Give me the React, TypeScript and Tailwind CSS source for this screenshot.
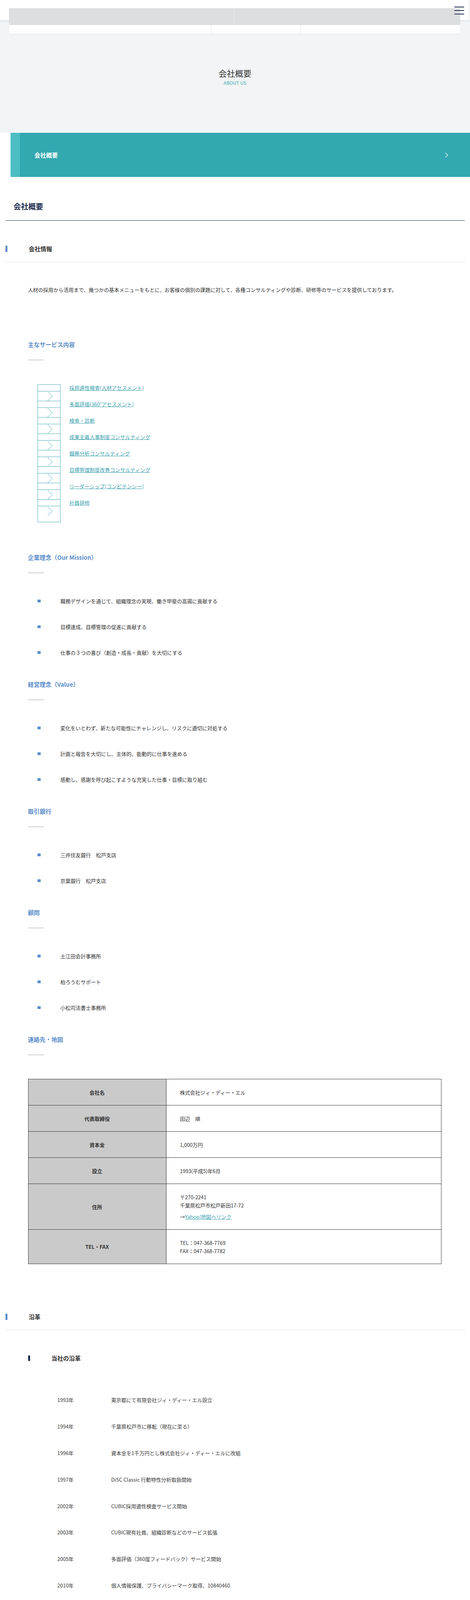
import React from "react";

const services = [
  "採用適性検査(人材アセスメント)",
  "多面評価(360°アセスメント)",
  "検査・診断",
  "成果主義人事制度コンサルティング",
  "職務分析コンサルティング",
  "目標管理制度改善コンサルティング",
  "リーダーシップ(コンピテンシー)",
  "社員研修",
];

const mission = [
  "職務デザインを通じて、組織理念の実現、働き甲斐の高揚に貢献する",
  "目標達成、目標管理の促進に貢献する",
  "仕事の３つの喜び（創造・成長・貢献）を大切にする",
];

const values = [
  "変化をいとわず、新たな可能性にチャレンジし、リスクに適切に対処する",
  "計画と報告を大切にし、主体的、能動的に仕事を進める",
  "感動し、感謝を呼び起こすような充実した仕事・目標に取り組む",
];

const banks = ["三井住友銀行　松戸支店", "京葉銀行　松戸支店"];
const advisors = ["土江田会計事務所", "柏ろうむサポート", "小松司法書士事務所"];

const history: { year: string; lines: string[] }[] = [
  { year: "1993年", lines: ["東京都にて有限会社ジィ・ディー・エル設立"] },
  { year: "1994年", lines: ["千葉県松戸市に移転（現在に至る）"] },
  { year: "1996年", lines: ["資本金を1千万円とし株式会社ジィ・ディー・エルに改組"] },
  { year: "1997年", lines: ["DiSC Classic 行動特性分析取扱開始"] },
  { year: "2002年", lines: ["CUBIC採用適性検査サービス開始"] },
  { year: "2003年", lines: ["CUBIC現有社員、組織診断などのサービス拡張"] },
  { year: "2005年", lines: ["多面評価（360度フィードバック）サービス開始"] },
  { year: "2010年", lines: ["個人情報保護、プライバシーマーク取得、10840460"] },
  { year: "2011年", lines: ["Web採用適性検査Compass取扱開始"] },
  { year: "2012年", lines: ["ストレス耐性診断DIST取扱開始"] },
  { year: "2013年", lines: ["CUBICストレス耐性診断取扱開始"] },
  { year: "2014年", lines: ["アドバンテッジインサイト、一般常識・時事問題取扱開始"] },
  { year: "2015年", lines: ["情報漏えい保険加入", "CUBIC for WEB 採用適性検査 取扱開始"] },
  { year: "2017年", lines: ["CUBICスマホ対応ホームページ整備"] },
  { year: "2018年", lines: ["ISO27001 認証取得"] },
  { year: "2019年", lines: ["360度フィードバック ver8.0サービス開始"] },
  { year: "2020年", lines: ["AIによる適性検査分析サービス開始"] },
  { year: "2023年", lines: ["田辺和彦が非常勤取締役に、田辺 順が代表取締役に就任(9月)"] },
];

function H2({ children, className }: { children: React.ReactNode; className: string }) {
  return (
    <div className={`border-b border-[#e0e0e0] pb-[21px] ${className}`}>
      <div className="flex h-[24px] items-center">
        <span className="h-[16px] w-[5px] shrink-0 bg-[#5b8dc9]" />
        <h2 className="ml-[55px] text-[15px] font-bold leading-[24px] text-[#333333]">{children}</h2>
      </div>
    </div>
  );
}

function SubHeading({ children, className }: { children: React.ReactNode; className: string }) {
  return (
    <div className={className}>
      <h4 className="text-[15px] font-bold leading-[22px] text-[#5b8dc9]">{children}</h4>
      <div className="mt-[27px] h-[3px] w-[40px] bg-[#dddddd]" />
    </div>
  );
}

function BulletList({ items }: { items: string[] }) {
  return (
    <ul className="mt-[37px]">
      {items.map((t) => (
        <li key={t} className="flex h-[66px] items-center">
          <span className="ml-[24px] h-[7px] w-[8px] shrink-0 bg-[#5b8dc9]" />
          <span className="ml-[51px] text-[13px] leading-[21px] text-[#333333]">{t}</span>
        </li>
      ))}
    </ul>
  );
}

function ListChevron() {
  return (
    <svg width="14" height="23" viewBox="0 0 14 23" fill="none">
      <polyline points="1,0 13,11.5 1,23" stroke="#3fa6b1" strokeWidth="1" />
    </svg>
  );
}

export default function App() {
  return (
    <div className="h-[6000px] w-full overflow-hidden bg-white font-['Noto_Sans_CJK_JP','Noto_Sans',sans-serif] text-[#333333]">
      {/* Header */}
      <header className="relative z-10 h-[52px] bg-white shadow-[0_1px_4px_rgba(0,0,0,0.15)]">
        <div className="absolute left-[23px] top-[21px] z-20 w-[1155px]">
          <div className="flex h-[43px] bg-[#dcdfe0]">
            <div className="w-[577px] border-r border-[#eceeef]" />
            <div className="flex-1" />
          </div>
          <div className="flex h-[22px] bg-white shadow-[0_2px_3px_rgba(0,0,0,0.04)]">
            <div className="w-[518px] border-r border-[#e4e4e4]" />
            <div className="w-[229px] border-r border-[#e4e4e4]" />
            <div className="flex-1" />
          </div>
        </div>
        <div className="absolute right-[15px] top-[17px] z-30 flex w-[25px] flex-col gap-[7px]">
          <span className="h-[2px] w-full bg-[#1e2d50]" />
          <span className="h-[2px] w-full bg-[#1e2d50]" />
          <span className="h-[2px] w-full bg-[#1e2d50]" />
        </div>
        <div className="absolute right-[2px] top-0 h-[52px] w-px bg-[#d8d8d8]" />
      </header>

      {/* Hero */}
      <section className="h-[288px] bg-[#f2f4f5] pt-[120px] text-center">
        <h1 className="text-[21px] leading-[30px] text-[#333333]">会社概要</h1>
        <p className="mt-[2px] text-[12px] leading-[16px] text-[#3aa9b0]">ABOUT US</p>
      </section>

      {/* Teal bar */}
      <div className="ml-[27px] flex h-[113px] bg-[#32a8b0]">
        <div className="w-[24px] bg-[#4bbec4]" />
        <div className="flex flex-1 items-center justify-between pl-[37px] pr-[56px]">
          <span className="text-[15px] font-bold leading-[22px] text-white">会社概要</span>
          <svg width="8" height="12" viewBox="0 0 8 12" fill="none">
            <polyline points="1,0.5 7,6 1,11.5" stroke="#ffffff" strokeWidth="1.3" />
          </svg>
        </div>
      </div>

      <main className="mx-auto w-[1176px]">
        <h1 className="mt-[61px] pl-[21px] text-[19px] font-bold leading-[28px] text-[#1e2d50]">会社概要</h1>
        <div className="mt-[22px] h-px bg-[#1e2d50]" />

        {/* 会社情報 */}
        <H2 className="mt-[60px]">会社情報</H2>
        <div className="pl-[58px] pr-[60px]">
          <p className="mt-[60px] text-[13px] leading-[21px]">
            人材の採用から活用まで、幾つかの基本メニューをもとに、お客様の個別の課題に対して、各種コンサルティングや診断、研修等のサービスを提供しております。
          </p>

          <SubHeading className="mt-[119px]">主なサービス内容</SubHeading>
          <ul className="ml-[24px] mt-[61px]">
            {services.map((s, i) => (
              <li key={s}>
                <div className="flex">
                  <div className="h-[17px] w-[59px] shrink-0 border-x border-t border-[#48a9b5]" />
                  <a href="#" className="ml-[23px] text-[13px] leading-[17px] text-[#3a9fad] underline">
                    {s}
                  </a>
                </div>
                <div className="flex h-[25px] w-[59px] items-center justify-center border-x border-t border-[#48a9b5] pl-[6px]">
                  <ListChevron />
                </div>
                {i === services.length - 1 && (
                  <div className="h-[17px] w-[59px] border-x border-b border-[#48a9b5]" />
                )}
              </li>
            ))}
          </ul>

          <SubHeading className="mt-[79px]">企業理念（Our Mission）</SubHeading>
          <BulletList items={mission} />

          <SubHeading className="mt-[38px]">経営理念（Value）</SubHeading>
          <BulletList items={values} />

          <SubHeading className="mt-[38px]">取引銀行</SubHeading>
          <BulletList items={banks} />

          <SubHeading className="mt-[38px]">顧問</SubHeading>
          <BulletList items={advisors} />

          <SubHeading className="mt-[38px]">連絡先・地図</SubHeading>
          <table className="mt-[60px] w-full border-collapse text-[13px] leading-[21px] text-[#333333]">
            <tbody>
              {[
                ["会社名", "株式会社ジィ・ディー・エル"],
                ["代表取締役", "田辺　順"],
                ["資本金", "1,000万円"],
                ["設立", "1993(平成5)年6月"],
              ].map(([k, v]) => (
                <tr key={k}>
                  <th className="w-[353px] border border-[#333333] bg-[#cacaca] py-[22.5px] text-center font-bold">{k}</th>
                  <td className="border border-[#333333] py-[22.5px] pl-[35px] text-left">{v}</td>
                </tr>
              ))}
              <tr>
                <th className="w-[353px] border border-[#333333] bg-[#cacaca] py-[22.5px] text-center font-bold">住所</th>
                <td className="border border-[#333333] py-[22.5px] pl-[35px] text-left">
                  <p>〒270-2241</p>
                  <p>千葉県松戸市松戸新田17-72</p>
                  <p className="mt-[8px]">
                    →<a href="#" className="text-[#3a9fad] underline">Yahoo!地図へリンク</a>
                  </p>
                </td>
              </tr>
              <tr>
                <th className="w-[353px] border border-[#333333] bg-[#cacaca] py-[22.5px] text-center font-bold">TEL・FAX</th>
                <td className="border border-[#333333] py-[22.5px] pl-[35px] text-left">
                  <p>TEL：047-368-7769</p>
                  <p>FAX：047-368-7782</p>
                </td>
              </tr>
            </tbody>
          </table>
        </div>

        {/* 沿革 */}
        <H2 className="mt-[123px]">沿革</H2>
        <div className="pl-[58px] pr-[60px]">
          <div className="mt-[60px] flex h-[24px] items-center">
            <span className="h-[14px] w-[5px] shrink-0 bg-[#1e2d50]" />
            <h3 className="ml-[55px] text-[15px] font-bold leading-[24px] text-[#333333]">当社の沿革</h3>
          </div>
          <div className="mt-[61px]">
            {history.map((h) => (
              <div key={h.year} className="flex items-center py-[23.4px] text-[13px] leading-[21px] text-[#3a3a3a]">
                <div className="w-[213px] shrink-0 pl-[75px]">{h.year}</div>
                <div>
                  {h.lines.map((l) => (
                    <p key={l}>{l}</p>
                  ))}
                </div>
              </div>
            ))}
          </div>
        </div>

        {/* ISO */}
        <H2 className="mt-[123px]">ISO27001 認証取得</H2>
        <div className="pl-[58px] pr-[60px]">
          <p className="mt-[60px] text-[13px] leading-[21px]">
            平素はいつも弊社サービスをご利用いただき誠にありがとうございます。弊社は2018年12月6日に国際標準規格ISO27001 情報セキュリティマネジメントシステムを本社にて認証取得致しました。ISO27001の認証取得を機会に、これまで以上に情報セキュリティを強化し、サービスを安全・安定的に提供いたします。
          </p>
        </div>
        <p className="mt-[57px] text-[14px] leading-[21px]">
          <a href="#" className="text-[#3a9fad] underline">『ISO27001 認証取得』の詳細</a>
        </p>

        {/* 情報セキュリティ基本方針 */}
        <H2 className="mt-[123px]">情報セキュリティ基本方針</H2>
        <div className="pl-[58px] pr-[60px]">
          <SubHeading className="mt-[60px]">目的</SubHeading>
          <p className="mt-[60px] text-[13px] leading-[21px]">
            弊社はクラウド上でのアプリケーションサービス（ＡＳＰ）を提供する立場であり、ＡＳＰ利用者の個人情報を含むセキュリティに十分配慮し、対策を講じる必要がある。お客様から信頼される情報流通企業として、お客様情報のセキュリティに関するインシデントの防止を図ることにより、お客様の信頼確保及び事業損失を最小限に留めることを目的とする。
          </p>
          <SubHeading className="mt-[118px]">方針</SubHeading>
          <p className="mt-[60px] text-[13px] leading-[21px]">弊社は上記目的に伴い、9項目の情報セキュリティ方針を掲げています。</p>
        </div>
        <div className="text-[13px] leading-[21px]">
          <p className="mt-[59px]">1. 基本方針：ある程度、実績のあるIT技術を利用して、従業員やお客様に過度な負担がかからないよう、かつ、必要な情報セキュリティレベルの提供を継続的に行う。</p>
          <p className="mt-[60px]">2. アクセス制御方針：必要な権限範囲を最小限にとどめつつ、必要な場合はロールの割当で業務の運営をスムーズに行う。</p>
          <p className="mt-[60px]">3. 暗号による管理策の利用方針：情報の重要度に応じて暗号化の程度を定め、運用する。</p>
        </div>
      </main>
    </div>
  );
}
